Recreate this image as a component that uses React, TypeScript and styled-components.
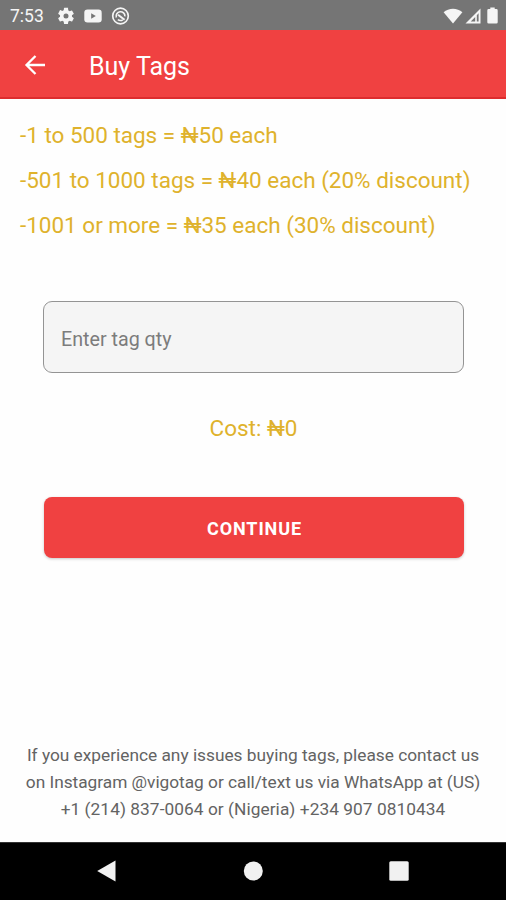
import React from 'react';
import styled, { createGlobalStyle } from 'styled-components';

const GlobalStyle = createGlobalStyle`
  *, *::before, *::after { box-sizing: border-box; }
  body { margin: 0; background: #fff; font-family: Roboto, sans-serif; }
`;

const Screen = styled.div`
  display: flex;
  flex-direction: column;
  width: 506px;
  height: 900px;
  overflow: hidden;
  background: #fefefe;
`;

const StatusBar = styled.header`
  display: flex;
  align-items: center;
  justify-content: space-between;
  height: 30px;
  padding: 1px 8px 0 10px;
  background: #757575;
  color: #f5f5f5;
`;

const StatusGroup = styled.div<{ $gap: number }>`
  display: flex;
  align-items: center;
  gap: ${({ $gap }) => $gap}px;
  svg { display: block; }
`;

const Clock = styled.span`
  width: 38px;
  padding-top: 1px;
  font-size: 17.5px;
  line-height: 20px;
  white-space: nowrap;
`;

const AppBar = styled.nav`
  display: flex;
  align-items: center;
  gap: 39px;
  height: 69px;
  padding: 2px 20px 0;
  background: #f04141;
  border-bottom: 2px solid #dd2c2e;
  color: #fff;
`;

const IconButton = styled.button`
  display: grid;
  place-items: center;
  width: 30px;
  height: 30px;
  padding: 0;
  border: 0;
  background: none;
  color: inherit;
`;

const Title = styled.h1`
  margin: 0;
  padding-top: 4px;
  font-size: 25px;
  font-weight: 400;
  line-height: 32px;
`;

const Content = styled.main`
  display: flex;
  flex-direction: column;
  flex: 1;
`;

const PriceList = styled.ul`
  margin: 0;
  padding: 14px 20px 0;
  list-style: none;
  color: #dfb22c;
`;

const PriceRow = styled.li`
  height: 45px;
  font-size: 22.5px;
  line-height: 45px;
  letter-spacing: -0.01px;
  white-space: nowrap;
`;

const OrderForm = styled.form`
  display: flex;
  flex-direction: column;
  align-items: stretch;
  padding: 53px 42px 0 43px;
`;

const QuantityInput = styled.input`
  height: 72px;
  padding: 4px 17px 0;
  border: 1px solid #949494;
  border-radius: 9px;
  background: #f5f5f5;
  color: #444;
  font: 400 19.7px Roboto, sans-serif;
  outline: none;
  &::placeholder { color: #7c7c7c; opacity: 1; }
`;

const Cost = styled.output`
  display: block;
  margin-top: 39px;
  font-size: 22.5px;
  line-height: 32px;
  text-align: center;
  color: #dfb22c;
`;

const ContinueButton = styled.button`
  height: 61px;
  margin: 52.5px 0.5px 0;
  padding: 2px 0 0 2px;
  border: 0;
  border-radius: 8px;
  background: #f04141;
  box-shadow: 0 1px 3px rgba(0, 0, 0, 0.22);
  color: #fff;
  font: 700 18px Roboto, sans-serif;
  letter-spacing: 0.9px;
`;

const SupportNote = styled.p`
  margin: auto 0 19px;
  font-size: 17.3px;
  line-height: 27px;
  text-align: center;
  color: #636363;
`;

const NoteLine = styled.span<{ $spacing: number }>`
  display: block;
  white-space: nowrap;
  letter-spacing: ${({ $spacing }) => $spacing}px;
`;

const NavigationBar = styled.footer`
  display: grid;
  grid-template-columns: 20px 20px 20px;
  justify-content: center;
  column-gap: 126px;
  align-items: center;
  height: 58px;
  padding-bottom: 1px;
  background: #000;
  border-top: 1px solid #333;
  svg { display: block; }
`;

const prices = [
  '-1 to 500 tags = ₦50 each',
  '-501 to 1000 tags = ₦40 each (20% discount)',
  '-1001 or more = ₦35 each (30% discount)',
];

const noteLines = [
  { text: 'If you experience any issues buying tags, please contact us', spacing: 0 },
  { text: 'on Instagram @vigotag or call/text us via WhatsApp at (US)', spacing: -0.02 },
  { text: '+1 (214) 837-0064 or (Nigeria) +234 907 0810434', spacing: 0.06 },
];

const GearIcon = () => (
  <svg width="20" height="20" viewBox="0 0 24 24" fill="currentColor">
    <path d="M19.14 12.94c.04-.3.06-.61.06-.94s-.02-.64-.07-.94l2.03-1.58a.49.49 0 0 0 .12-.61l-1.92-3.32a.49.49 0 0 0-.59-.22l-2.39.96a7 7 0 0 0-1.62-.94l-.36-2.54A.48.48 0 0 0 13.92 2h-3.84a.48.48 0 0 0-.47.41l-.36 2.54a7.4 7.4 0 0 0-1.62.94l-2.39-.96a.48.48 0 0 0-.59.22L2.74 8.87a.47.47 0 0 0 .12.61l2.03 1.58a6 6 0 0 0-.02 1.88l-2.03 1.58a.49.49 0 0 0-.12.61l1.92 3.32c.12.22.37.29.59.22l2.39-.96c.5.38 1.03.7 1.62.94l.36 2.54c.05.24.24.41.48.41h3.84c.24 0 .44-.17.47-.41l.36-2.54a7 7 0 0 0 1.62-.94l2.39.96c.22.08.47 0 .59-.22l1.92-3.32a.47.47 0 0 0-.12-.61zM12 15a3 3 0 1 1 0-6 3 3 0 0 1 0 6z" />
  </svg>
);

const VideoIcon = () => (
  <svg width="18" height="14" viewBox="0 0 18 14">
    <rect x="0.3" y="0.5" width="17.4" height="13" rx="3.2" fill="currentColor" />
    <path d="M7.2 4.3v5.4L11.8 7z" fill="#757575" />
  </svg>
);

const SyncOffIcon = () => (
  <svg width="20" height="18" viewBox="0 0 20 18" fill="none" stroke="currentColor">
    <circle cx="10.5" cy="9" r="7.8" strokeWidth="1.7" />
    <path d="M6.3 10.4A4.4 4.4 0 1 1 14.9 9.4" strokeWidth="1.6" />
    <path d="M7.8 12.6a4.4 4.4 0 0 0 5 .2" strokeWidth="1.4" />
    <path d="M8 7.8l6.6 4.9" strokeWidth="2" />
  </svg>
);

const WifiIcon = () => (
  <svg width="20" height="16" viewBox="0 0 20 16" fill="currentColor">
    <path d="M10 15.5.6 4.2C3.2 2 6.5.7 10 .7s6.8 1.3 9.4 3.5z" />
  </svg>
);

const SignalIcon = () => (
  <svg width="20" height="16" viewBox="0 0 20 16">
    <path d="M15.500.5v15H.5z" fill="currentColor" />
    <path d="M13.6 5.2v8.400h-1.800V7.200zM10.200 9v4.600H5.700z" fill="#757575" />
  </svg>
);

const BatteryIcon = () => (
  <svg width="11" height="17" viewBox="0 0 11 17" fill="currentColor">
    <path d="M3.3.4h4.4v1.7h1.7q1.3 0 1.3 1.3v11.9q0 1.3-1.3 1.3H1.6Q.3 16.6.3 15.3V3.4q0-1.3 1.3-1.3h1.7z" />
  </svg>
);

const BackArrowIcon = () => (
  <svg width="30" height="30" viewBox="0 0 30 30" fill="none" stroke="currentColor" strokeWidth="2.3">
    <path d="M25 15H7M15.500 6 6.500 15l9 9" />
  </svg>
);

export default function App() {
  return (
    <>
      <GlobalStyle />
      <Screen>
        <StatusBar>
          <StatusGroup $gap={8}>
            <Clock>7:53</Clock>
            <GearIcon />
            <VideoIcon />
            <SyncOffIcon />
          </StatusGroup>
          <StatusGroup $gap={2}>
            <WifiIcon />
            <SignalIcon />
            <BatteryIcon />
          </StatusGroup>
        </StatusBar>
        <AppBar>
          <IconButton aria-label="Back"><BackArrowIcon /></IconButton>
          <Title>Buy Tags</Title>
        </AppBar>
        <Content>
          <PriceList>
            {prices.map((label) => (
              <PriceRow key={label}>{label}</PriceRow>
            ))}
          </PriceList>
          <OrderForm>
            <QuantityInput placeholder="Enter tag qty" />
            <Cost>Cost: ₦0</Cost>
            <ContinueButton type="button">CONTINUE</ContinueButton>
          </OrderForm>
          <SupportNote>
            {noteLines.map(({ text, spacing }) => (
              <NoteLine key={text} $spacing={spacing}>{text}</NoteLine>
            ))}
          </SupportNote>
        </Content>
        <NavigationBar>
          <svg width="20" height="22" viewBox="0 0 20 22"><path d="M18.500.5v21L.2 11z" fill="#f1f1f1" /></svg>
          <svg width="20" height="20" viewBox="0 0 20 20"><circle cx="10.3" cy="10" r="9.5" fill="#f1f1f1" /></svg>
          <svg width="20" height="20" viewBox="0 0 20 20"><rect x=".3" y=".3" width="19.4" height="19.4" rx="1.5" fill="#f1f1f1" /></svg>
        </NavigationBar>
      </Screen>
    </>
  );
}
